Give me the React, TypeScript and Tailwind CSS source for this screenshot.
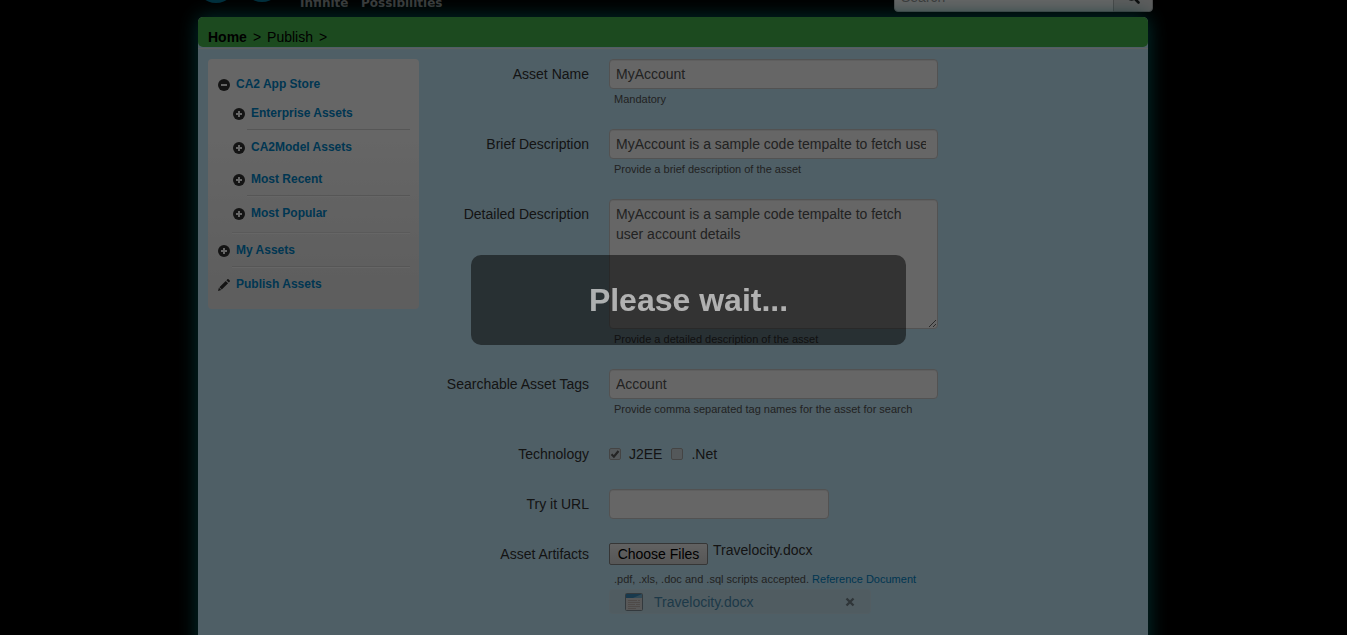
import type { ReactNode } from "react";

function PlusIcon() {
  return (
    <svg viewBox="0 0 12 12" className="mt-[2px] size-3 shrink-0" aria-hidden="true">
      <circle cx="6" cy="6" r="6" fill="#333" />
      <path d="M5 3h2v2h2v2H7v2H5V7H3V5h2z" fill="#fff" />
    </svg>
  );
}

function MinusIcon() {
  return (
    <svg viewBox="0 0 12 12" className="mt-[2px] size-3 shrink-0" aria-hidden="true">
      <circle cx="6" cy="6" r="6" fill="#333" />
      <path d="M3 5h6v2H3z" fill="#fff" />
    </svg>
  );
}

function PencilIcon() {
  return (
    <svg viewBox="0 0 12 12" className="mt-[2px] size-3 shrink-0" aria-hidden="true">
      <path d="M9.2 0.4c.5-.5 1-.5 1.500 0l.9.9c.5.5.5 1 0 1.500l-.8.8-2.400-2.400zM7.700 1.900l2.400 2.400-6.300 6.300-2.400-2.400zM.9 8.700l2.400 2.400L0 12z" fill="#333" />
    </svg>
  );
}

function NavItem({ icon, children }: { icon: ReactNode; children: ReactNode }) {
  return (
    <a href="#" className="flex h-5 items-center gap-1.5 text-xs font-bold leading-5 text-[#0088cc]">
      {icon}
      {children}
    </a>
  );
}

function Divider() {
  return <div className="my-[6px] ml-[14px] h-[2px] border-b border-white bg-[#d8d8d8]" />;
}

function Sidebar() {
  return (
    <nav className="w-[211px] shrink-0 self-start rounded-[4px] bg-linear-to-b from-white from-30% to-[#ebebeb] to-90% py-[15px] pr-[9px] pl-[10px]">
      <NavItem icon={<MinusIcon />}>CA2 App Store</NavItem>
      <div className="mt-[9px] mb-[9px] pl-[15px]">
        <NavItem icon={<PlusIcon />}>Enterprise Assets</NavItem>
        <Divider />
        <NavItem icon={<PlusIcon />}>CA2Model Assets</NavItem>
        <div className="h-3" />
        <NavItem icon={<PlusIcon />}>Most Recent</NavItem>
        <Divider />
        <NavItem icon={<PlusIcon />}>Most Popular</NavItem>
      </div>
      <div className="mb-[6px] ml-[14px] h-[2px] border-b border-white bg-[#e0e0e0]" />
      <NavItem icon={<PlusIcon />}>My Assets</NavItem>
      <Divider />
      <NavItem icon={<PencilIcon />}>Publish Assets</NavItem>
    </nav>
  );
}

function Field({ label, htmlFor, help, children }: { label: string; htmlFor: string; help?: ReactNode; children: ReactNode }) {
  return (
    <div className="mb-5 flex gap-5">
      <label htmlFor={htmlFor} className="w-[160px] shrink-0 pt-[5px] text-right">
        {label}
      </label>
      <div className="min-w-0">
        {children}
        {help && <p className="pl-[5px] text-[11px] leading-5 text-[#555]">{help}</p>}
      </div>
    </div>
  );
}

const box =
  "block rounded-[4px] border border-[#ccc] bg-white pr-[11px] pl-1.5 text-sm leading-5 text-[#555] shadow-[inset_0_1px_1px_rgba(0,0,0,0.075)]";

function DocumentIcon() {
  return (
    <svg viewBox="0 0 18 18" className="h-[18px] w-[18px]" aria-hidden="true">
      <rect x="0.5" y="0.5" width="17" height="17" rx="1" fill="#dcdcdc" stroke="#7f9099" />
      <rect x="1" y="1" width="16" height="4" fill="#3d8fc0" />
      <path d="M17 1v4H8z" fill="#7cb8da" />
      <path d="M3 7.5h9M13 7.5h2M3 9.500h12M3 11.500h7M11 11.500h4M3 13.500h12M3 15.500h8" stroke="#c4bab4" strokeWidth="1" />
    </svg>
  );
}

function Tick({ id, label, checked }: { id: string; label: string; checked?: boolean }) {
  return (
    <span className="mr-[9px] flex items-center gap-2">
      <span className="grid">
        <input
          id={id}
          type="checkbox"
          defaultChecked={checked}
          className="peer col-start-1 row-start-1 size-3 appearance-none rounded-[2px] border border-[#aaa] bg-[#d3dde1]"
        />
        <svg
          viewBox="0 0 12 12"
          className="pointer-events-none invisible col-start-1 row-start-1 size-3 peer-checked:visible"
          aria-hidden="true"
        >
          <path d="M2.500 6.200l2.400 2.500L9.500 3" fill="none" stroke="#5c5c5c" strokeWidth="2.200" />
        </svg>
      </span>
      <label htmlFor={id}>{label}</label>
    </span>
  );
}

export default function App() {
  return (
    <div className="flex min-h-screen flex-col overflow-hidden bg-black font-['Liberation_Sans',Arial,sans-serif] text-sm leading-5 text-[#333]">
      <header className="flex h-[17px] items-end justify-center pr-px">
        <div className="flex w-full max-w-[960px] items-end justify-between pb-[5px]">
          <div className="flex items-end pl-[9px]">
            <svg viewBox="0 0 80 40" className="mb-[9px] h-10 w-20" aria-hidden="true">
              <circle cx="14" cy="20" r="20" fill="#00789b" />
              <circle cx="60" cy="19" r="20" fill="#00789b" />
            </svg>
            <span className="ml-[18px] whitespace-pre font-['DejaVu_Sans',sans-serif] text-xs font-bold leading-[18px] text-[#999]">
              Infinite   Possibilities
            </span>
          </div>
          <form className="flex" onSubmit={(e) => e.preventDefault()}>
            <input
              aria-label="Search"
              placeholder="Search"
              className="h-[30px] w-[220px] rounded-l-[4px] border border-[#ccc] bg-white px-1.5 text-sm placeholder:text-[#999]"
            />
            <button
              aria-label="Submit search"
              className="-ml-px flex h-[30px] w-10 items-center justify-center rounded-r-[4px] border border-[#bbb] bg-[#e9e9e9]"
            >
              <svg viewBox="0 0 14 14" className="size-3.5" aria-hidden="true">
                <circle cx="5.500" cy="5.500" r="4.300" fill="none" stroke="#222" strokeWidth="2" />
                <path d="M9 9l3.500 3.500" stroke="#222" strokeWidth="2.600" strokeLinecap="round" />
              </svg>
            </button>
          </form>
        </div>
      </header>

      <div className="flex flex-1 justify-center pr-px">
        <main className="-mb-8 w-full max-w-[950px] rounded-t-[5px] bg-[#c6edff] shadow-[0_0_20px_#007878]">
          <div className="flex h-[30px] items-center gap-[6px] rounded-[5px] bg-[#48b94e] pt-[9px] pl-[10px] text-black">
            <a href="#" className="font-bold">Home</a>
            <span>&gt;</span>
            <a href="#">Publish</a>
            <span>&gt;</span>
          </div>
          <div className="mt-px h-px bg-[#eee]" />
          <div className="flex gap-[10px] px-[10px] pt-[10px]">
            <Sidebar />
            <form className="min-w-0 flex-1" onSubmit={(e) => e.preventDefault()}>
              <Field label="Asset Name" htmlFor="name" help="Mandatory">
                <input id="name" defaultValue="MyAccount" className={box + " h-[30px] w-[329px]"} />
              </Field>
              <Field label="Brief Description" htmlFor="brief" help="Provide a brief description of the asset">
                <input
                  id="brief"
                  defaultValue="MyAccount is a sample code tempalte to fetch user account details"
                  className={box + " h-[30px] w-[329px]"}
                />
              </Field>
              <Field label="Detailed Description" htmlFor="detail" help="Provide a detailed description of the asset">
                <textarea
                  id="detail"
                  defaultValue="MyAccount is a sample code tempalte to fetch user account details"
                  className={box + " h-[130px] w-[329px] py-1"}
                />
              </Field>
              <Field
                label="Searchable Asset Tags"
                htmlFor="tags"
                help="Provide comma separated tag names for the asset for search"
              >
                <input id="tags" defaultValue="Account" className={box + " h-[30px] w-[329px]"} />
              </Field>
              <Field label="Technology" htmlFor="j2ee">
                <div className="flex h-[30px] items-center">
                  <Tick id="j2ee" label="J2EE" checked />
                  <Tick id="net" label=".Net" />
                </div>
              </Field>
              <Field label="Try it URL" htmlFor="url">
                <input id="url" className={box + " h-[30px] w-[220px]"} />
              </Field>
              <Field
                label="Asset Artifacts"
                htmlFor="files"
                help={
                  <>
                    .pdf, .xls, .doc and .sql scripts accepted.{" "}
                    <a href="#" className="text-[#0088cc]">Reference Document</a>
                  </>
                }
              >
                <div className="flex h-[30px] gap-[5px]">
                  <button
                    id="files"
                    type="button"
                    className="mt-1 h-[22px] w-[99px] rounded-[2px] border border-[#888] bg-linear-to-b from-[#f4f4f4] to-[#d8d8d8] text-sm leading-5 text-black"
                  >
                    Choose Files
                  </button>
                  <span className="pt-px">Travelocity.docx</span>
                </div>
              </Field>
              <div className="-mt-5 ml-[180px] flex h-[25px] w-[262px] items-center rounded-[4px] border border-[#cde9f4] bg-[#c9e6f2] pr-[14px] pl-[15px]">
                <DocumentIcon />
                <a href="#" className="ml-[11px] flex-1 text-[#4a8fb5]">Travelocity.docx</a>
                <button type="button" aria-label="Remove file" className="flex size-3 items-center justify-center">
                  <svg viewBox="0 0 10 10" className="size-2.5" aria-hidden="true">
                    <path d="M1.500 1.500l7 7M8.500 1.500l-7 7" stroke="#76858c" strokeWidth="2.400" />
                  </svg>
                </button>
              </div>
            </form>
          </div>
        </main>
      </div>

      <div className="fixed inset-0 bg-black/60" />
      <div
        role="status"
        className="fixed top-[calc(40%+1px)] left-[35%] box-content flex h-[60px] w-[30%] items-center justify-center rounded-[10px] bg-black/50 p-[15px]"
      >
        <h1 className="text-[32px] font-bold leading-10 text-white/62">Please wait...</h1>
      </div>
    </div>
  );
}
